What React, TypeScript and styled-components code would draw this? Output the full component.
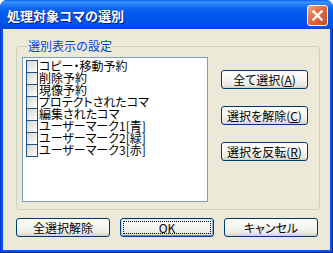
import React from "react";
import styled, { createGlobalStyle } from "styled-components";

const Global = createGlobalStyle`
  html, body { margin: 0; padding: 0; background: #ffffff; }
  body { font-family: "Noto Sans CJK JP", "Noto Sans", sans-serif; font-size: 12px; }
`;

const Window = styled.div`
  width: 333px;
  height: 253px;
  display: flex;
  flex-direction: column;
  border-radius: 7px 7px 0 0;
  overflow: hidden;
  background: #0058ee;
`;

const TitleBar = styled.div`
  height: 29px;
  box-sizing: border-box;
  flex: none;
  display: flex;
  align-items: center;
  justify-content: space-between;
  padding: 5px 5px 3px 7px;
  background: linear-gradient(
    180deg,
    #0a5ee8 0px,
    #3d95ff 2px,
    #2b83fb 4px,
    #0a63f0 9px,
    #0058ee 15px,
    #0055ea 22px,
    #0050e0 26px,
    #0047d4 29px
  );
`;

const Title = styled.span`
  color: #ffffff;
  font-weight: bold;
  font-size: 13px;
  line-height: 14px;
  text-shadow: 1px 1px 0 #0a1883;
`;

const CloseButton = styled.div`
  width: 21px;
  height: 21px;
  box-sizing: border-box;
  border: 1px solid #ffffff;
  border-radius: 3px;
  background: linear-gradient(135deg, #f2a486 0%, #e4693f 45%, #cc4a1e 100%);
  display: flex;
  align-items: center;
  justify-content: center;
`;

const Frame = styled.div`
  flex: 1;
  display: flex;
  padding: 0 3px 3px 3px;
  background: #0058ee;
  box-shadow: inset 1px 0 #0831d9, inset -1px 0 #001ea0, inset 0 -1px #001ea0;
`;

const Client = styled.div`
  flex: 1;
  background: #ece9d8;
  display: flex;
  flex-direction: column;
  padding: 11px 10px 0 13px;
`;

const Group = styled.fieldset`
  margin: 0;
  width: 304px;
  height: 170px;
  box-sizing: border-box;
  border: 1px solid #d0d0bf;
  border-radius: 4px;
  padding: 5px 11px 0 5px;
  display: flex;
  gap: 13px;
  align-items: flex-start;
`;

const Legend = styled.legend`
  color: #0046d5;
  font-size: 12px;
  line-height: 12px;
  padding: 0 1px;
  margin-left: 5px;
`;

const ListBox = styled.div`
  width: 186px;
  height: 145px;
  box-sizing: border-box;
  border: 1px solid #7f9db9;
  background: #ffffff;
  padding: 2px 0 0 3px;
  display: flex;
  flex-direction: column;
`;

const Item = styled.div`
  height: 12px;
  display: flex;
  align-items: flex-start;
  gap: 1px;
`;

const Check = styled.span`
  width: 12px;
  height: 13px;
  flex: none;
  box-sizing: border-box;
  border: 1px solid #1c5180;
  background: linear-gradient(135deg, #d6d5ce 0%, #eeeee9 60%, #ffffff 100%);
`;

const ItemText = styled.span`
  font-size: 12px;
  line-height: 12px;
  color: #000000;
  white-space: nowrap;
  font-feature-settings: "palt";
`;

const SideButtons = styled.div`
  display: flex;
  flex-direction: column;
  gap: 17px;
  padding-top: 13px;
`;

const Button = styled.button<{ $w: number; $default?: boolean }>`
  position: relative;
  width: ${(p) => p.$w}px;
  height: 19px;
  box-sizing: border-box;
  margin: 0;
  padding: 0;
  border: 1px solid #003c74;
  border-radius: 3px;
  background: linear-gradient(180deg, #ffffff 0%, #f7f7f4 40%, #eceae3 80%, #d6d0c5 100%);
  box-shadow: ${(p) =>
    p.$default
      ? "inset 0 1px #cee7ff, inset 1px 0 #bcd4f6, inset -1px 0 #89ade4, inset 0 -1px #6982ee"
      : "none"};
  font-family: "Noto Sans CJK JP", "Noto Sans", sans-serif;
  font-size: 12px;
  line-height: 12px;
  font-feature-settings: "palt";
  color: #000000;
  display: flex;
  align-items: center;
  justify-content: center;

  u {
    text-decoration: underline;
    text-underline-offset: 1px;
  }
`;

const FocusRing = styled.span`
  position: absolute;
  inset: 2px;
  border: 1px dotted #000000;
  pointer-events: none;
`;

const BottomRow = styled.div`
  display: flex;
  gap: 10px;
  padding-top: 8px;
`;

export default function App() {
  const items = [
    "コピー・移動予約",
    "削除予約",
    "現像予約",
    "プロテクトされたコマ",
    "編集されたコマ",
    "ユーザーマーク1[青]",
    "ユーザーマーク2[緑]",
    "ユーザーマーク3[赤]",
  ];
  return (
    <>
      <Global />
      <Window>
        <TitleBar>
          <Title>処理対象コマの選別</Title>
          <CloseButton>
            <svg width="11" height="11" viewBox="0 0 11 11">
              <path d="M1.5 1.5 L9.5 9.5 M9.5 1.5 L1.5 9.5" stroke="#ffffff" strokeWidth="2.4" strokeLinecap="square" />
            </svg>
          </CloseButton>
        </TitleBar>
        <Frame>
          <Client>
            <Group>
              <Legend>選別表示の設定</Legend>
              <ListBox>
                {items.map((t) => (
                  <Item key={t}>
                    <Check />
                    <ItemText>{t}</ItemText>
                  </Item>
                ))}
              </ListBox>
              <SideButtons>
                <Button $w={87}>
                  全て選択(<u>A</u>)
                </Button>
                <Button $w={87}>
                  選択を解除(<u>C</u>)
                </Button>
                <Button $w={87}>
                  選択を反転(<u>R</u>)
                </Button>
              </SideButtons>
            </Group>
            <BottomRow>
              <Button $w={94}>全選択解除</Button>
              <Button $w={94} $default>
                <FocusRing />
                OK
              </Button>
              <Button $w={94}>キャンセル</Button>
            </BottomRow>
          </Client>
        </Frame>
      </Window>
    </>
  );
}
